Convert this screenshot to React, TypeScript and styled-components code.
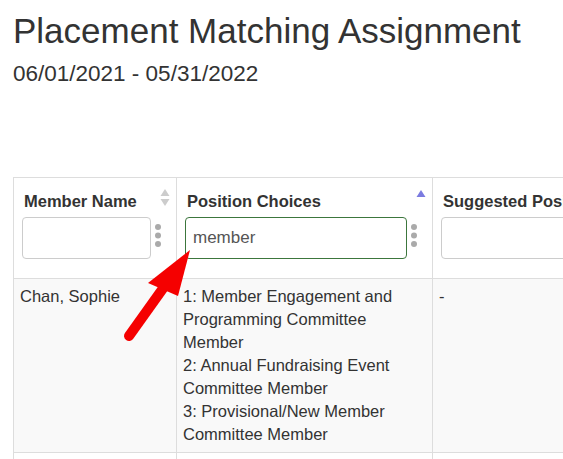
import React from 'react';
import styled, { createGlobalStyle } from 'styled-components';

const GlobalStyle = createGlobalStyle`
  html, body {
    margin: 0;
    padding: 0;
    background: #fff;
    overflow: hidden;
  }
  body {
    font-family: 'Liberation Sans', Arial, sans-serif;
    color: #333;
  }
`;

const Page = styled.div`
  position: relative;
  padding: 11px 0 0 13px;
  width: 563px;
  height: 459px;
  box-sizing: border-box;
  overflow: hidden;
`;

const Title = styled.h1`
  margin: 0;
  font-size: 35px;
  line-height: 40px;
  font-weight: 400;
  color: #333;
`;

const Subtitle = styled.div`
  margin-top: 10px;
  font-size: 22.5px;
  line-height: 25px;
  color: #333;
`;

const TableWrap = styled.div`
  margin-top: 91px;
  overflow: hidden;
`;

const Table = styled.table`
  border-collapse: collapse;
  table-layout: fixed;
  width: 669px;
`;

const HeadCell = styled.th<{ $width: number }>`
  position: relative;
  box-sizing: border-box;
  width: ${p => p.$width}px;
  padding: 14px 0 19px 8px;
  border: 1px solid #ddd;
  text-align: left;
  vertical-align: top;
  background: #fff;
`;

const Label = styled.div`
  font-size: 16.5px;
  line-height: 18px;
  font-weight: 700;
  color: #333;
  padding-left: 2px;
  white-space: nowrap;
  overflow: hidden;
`;

const FilterRow = styled.div`
  display: flex;
  align-items: center;
  margin-top: 7px;
  gap: 3px;
  padding-right: 14px;
`;

const FilterInput = styled.input<{ $success?: boolean }>`
  flex: 1;
  min-width: 0;
  height: 42px;
  box-sizing: border-box;
  padding: 6px 7px;
  border: 1px solid ${p => (p.$success ? '#3c763d' : '#ccc')};
  border-radius: 4px;
  font-family: 'Liberation Sans', Arial, sans-serif;
  font-size: 17px;
  color: #555;
  background: #fff;
  outline: none;
`;

const Kebab = styled.svg`
  flex: none;
  width: 8px;
  height: 24px;
  margin-top: -6px;
`;

const SortIcon = styled.svg`
  position: absolute;
  top: 10px;
  right: 6px;
  width: 10px;
  height: 19px;
`;

const Row = styled.tr<{ $striped?: boolean }>`
  background: ${p => (p.$striped ? '#f9f9f9' : '#fff')};
`;

const Cell = styled.td`
  padding: 6px;
  border: 1px solid #ddd;
  vertical-align: top;
  font-size: 16.5px;
  line-height: 23px;
  color: #333;
`;

const Arrow = styled.svg`
  position: absolute;
  left: 0;
  top: 0;
  width: 563px;
  height: 459px;
  pointer-events: none;
`;

const KebabIcon = () => (
  <Kebab viewBox="0 0 8 24">
    <circle cx="4" cy="4" r="3" fill="#aaa" />
    <circle cx="4" cy="12.5" r="3" fill="#aaa" />
    <circle cx="4" cy="21" r="3" fill="#aaa" />
  </Kebab>
);

type Sort = 'none' | 'asc';

const SortMark = ({ sort }: { sort: Sort }) =>
  sort === 'asc' ? (
    <SortIcon viewBox="0 0 10 19">
      <polygon points="5,2 9.5,9 0.5,9" fill="#7b7be0" />
    </SortIcon>
  ) : (
    <SortIcon viewBox="0 0 10 19">
      <polygon points="5,1 9.5,8 0.5,8" fill="#ccc" />
      <polygon points="5,18 9.5,11 0.5,11" fill="#ccc" />
    </SortIcon>
  );

const columns = [
  { label: 'Member Name', width: 163, sort: 'none' as Sort, value: '', success: false, kebab: true },
  { label: 'Position Choices', width: 256, sort: 'asc' as Sort, value: 'member', success: true, kebab: true },
  { label: 'Suggested Position', width: 250, sort: 'none' as Sort, value: '', success: false, kebab: false },
];

const rows = [
  {
    name: 'Chan, Sophie',
    choices: [
      '1: Member Engagement and Programming Committee Member',
      '2: Annual Fundraising Event Committee Member',
      '3: Provisional/New Member Committee Member',
    ],
    suggested: '-',
  },
  {
    name: '',
    choices: [],
    suggested: '',
  },
];

export default function App() {
  return (
    <>
      <GlobalStyle />
      <Page>
        <Title>Placement Matching Assignment</Title>
        <Subtitle>06/01/2021 - 05/31/2022</Subtitle>
        <TableWrap>
          <Table>
            <thead>
              <tr>
                {columns.map(col => (
                  <HeadCell key={col.label} $width={col.width}>
                    <Label>{col.label}</Label>
                    <FilterRow>
                      <FilterInput
                        type="text"
                        defaultValue={col.value}
                        $success={col.success}
                      />
                      {col.kebab && <KebabIcon />}
                    </FilterRow>
                    {col.kebab && <SortMark sort={col.sort} />}
                  </HeadCell>
                ))}
              </tr>
            </thead>
            <tbody>
              {rows.map((row, i) => (
                <Row key={i} $striped={i % 2 === 0}>
                  <Cell>{row.name}</Cell>
                  <Cell>
                    {row.choices.map(c => (
                      <div key={c}>{c}</div>
                    ))}
                  </Cell>
                  <Cell>{row.suggested}</Cell>
                </Row>
              ))}
            </tbody>
          </Table>
        </TableWrap>
        <Arrow viewBox="0 0 563 459">
          <line x1="129" y1="336" x2="164" y2="287" stroke="#f50000" strokeWidth="10" strokeLinecap="round" />
          <polygon points="190,250 178,296 148,283" fill="#f50000" />
        </Arrow>
      </Page>
    </>
  );
}
